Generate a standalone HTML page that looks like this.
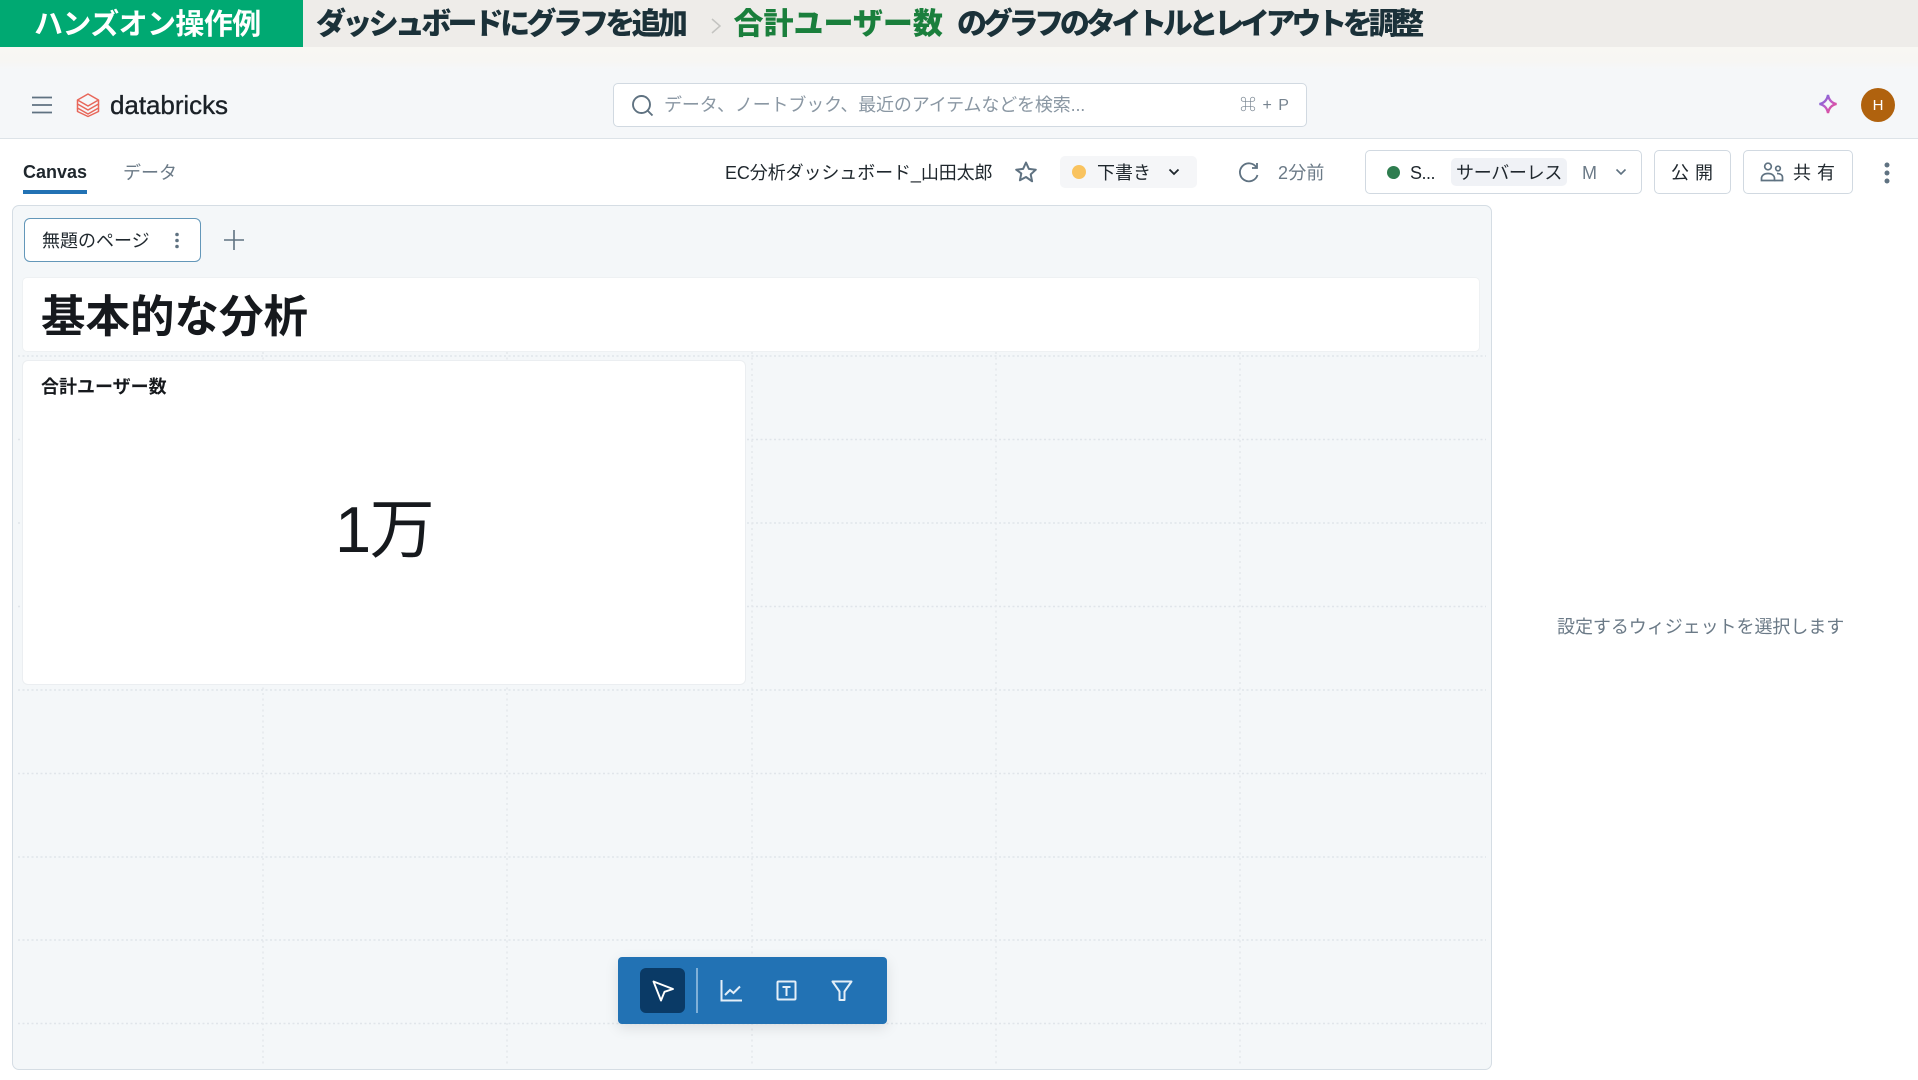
<!DOCTYPE html>
<html lang="ja"><head><meta charset="utf-8"><title>Databricks</title>
<style>
*{box-sizing:border-box}
html,body{margin:0;padding:0;width:1918px;height:1080px;overflow:hidden;background:#fff;font-family:"Liberation Sans","Noto Sans CJK JP",sans-serif;color:#1f272d}
.a{position:absolute;white-space:nowrap;line-height:1}
.c{position:absolute}
svg{position:absolute;overflow:visible}
.btn{position:absolute;background:#fff;border:1.5px solid #d1d9e1;border-radius:5px;height:44px;top:150px}
</style></head><body>

<!-- banner -->
<div class="c" style="left:0;top:0;width:1918px;height:47px;background:#eeece9"></div>
<div class="c" style="left:0;top:0;width:302.500px;height:47px;background:#00a972"></div>
<div class="c" style="left:0;top:47px;width:1918px;height:23px;background:linear-gradient(#f8f7f3,#f7f6f3 60%,#f5f7f9)"></div>
<div class="a" style="left:34px;top:10.500px;font-size:29px;font-weight:700;color:#fff;letter-spacing:-.6px">ハンズオン操作例</div>
<div class="a" style="left:316px;top:10px;font-size:30px;font-weight:900;color:#1b3139;letter-spacing:-3.7px">ダッシュボードにグラフを追加</div>
<svg style="left:710px;top:17px" width="12" height="18" viewBox="0 0 12 18"><path d="M2 2l8 7-8 7" fill="none" stroke="#c4c4c1" stroke-width="1.500"/></svg>
<div class="a" style="left:733.500px;top:10px;font-size:30px;font-weight:900;color:#1a7f3c">合計ユーザー数</div>
<div class="a" style="left:957px;top:10px;font-size:30px;font-weight:900;color:#1b3139;letter-spacing:-4.280px">のグラフのタイトルとレイアウトを調整</div>

<!-- top bar -->
<div class="c" style="left:0;top:70px;width:1918px;height:69px;background:#f5f7f9;border-bottom:1.5px solid #dde3e8"></div>
<svg style="left:32px;top:96px" width="20" height="18" viewBox="0 0 20 18"><path d="M0 1.500h20M0 9h20M0 16.500h20" stroke="#5f7281" stroke-width="1.700" fill="none"/></svg>
<svg style="left:76px;top:93px" width="24" height="24" viewBox="0 0 24 24" fill="none" stroke="#e8675a" stroke-width="1.500" stroke-linejoin="round"><path d="M12 1L22.500 7 12 13 1.500 7z"/><path d="M1.500 7v4L12 17l10.500-6V7"/><path d="M1.500 11v4L12 21l10.500-6v-4"/><path d="M1.500 15v3.500L12 23.500l10.500-5V15"/></svg>
<div class="a" style="left:110px;top:92px;font-size:26px;font-weight:400;color:#1b2127;letter-spacing:-.05px;-webkit-text-stroke:.35px #1b2127">databricks</div>

<div class="c" style="left:613px;top:83px;width:694px;height:44px;background:#fff;border:1.5px solid #d1d9e1;border-radius:5px"></div>
<svg style="left:631px;top:94px" width="23" height="23" viewBox="0 0 23 23" fill="none" stroke="#5f7281" stroke-width="1.900"><circle cx="10.500" cy="10.500" r="8.500"/><path d="M16.500 16.500l5 5"/></svg>
<div class="a" style="left:664px;top:96px;font-size:18px;color:#8a97a3;letter-spacing:-.15px">データ、ノートブック、最近のアイテムなどを検索...</div>
<div class="a" style="left:1240px;top:97.500px;font-size:16px;color:#76838f;letter-spacing:1px">⌘ + P</div>

<svg style="left:1816px;top:92px" width="24" height="24" viewBox="0 0 24 24" fill="none" stroke-width="2.300"><defs><linearGradient id="g" x1="0" y1="0" x2="1" y2="1"><stop offset="0" stop-color="#5b6be0"/><stop offset=".5" stop-color="#c05cc8"/><stop offset="1" stop-color="#f0467f"/></linearGradient></defs><path d="M12 3c1 5.200 3.500 8 8.500 9-5 1-7.500 3.800-8.500 9-1-5.200-3.500-8-8.500-9 5-1 7.500-3.800 8.500-9z" stroke="url(#g)"/></svg>
<div class="c" style="left:1861px;top:88px;width:34px;height:34px;border-radius:50%;background:#b0620e"></div>
<div class="a" style="left:1871.500px;top:98px;font-size:15px;color:#fff;width:13px;text-align:center">H</div>

<!-- tabs -->
<div class="a" style="left:23px;top:163px;font-size:18px;font-weight:700;color:#1f272d">Canvas</div>
<div class="c" style="left:23px;top:190px;width:64px;height:4px;background:#2272b4"></div>
<div class="a" style="left:123px;top:164px;font-size:18px;color:#6b7a87">データ</div>

<div class="a" style="left:725px;top:163.500px;font-size:18px;color:#1f272d;letter-spacing:-.1px">EC分析ダッシュボード_山田太郎</div>
<svg style="left:1014px;top:160px" width="24" height="24" viewBox="0 0 24 24" fill="none" stroke="#5f7281" stroke-width="2" stroke-linejoin="round"><path d="M12 2.500l2.900 6.400 6.900.8-5.100 4.700 1.400 6.900L12 17l-6.100 3.300 1.400-6.900L2.200 9.700l6.900-.8z"/></svg>
<div class="c" style="left:1060px;top:156px;width:137px;height:32px;background:#f5f6f8;border-radius:5px"></div>
<div class="c" style="left:1072px;top:165px;width:14px;height:14px;border-radius:50%;background:#f9c35f"></div>
<div class="a" style="left:1097px;top:163.500px;font-size:18px;color:#1f272d">下書き</div>
<svg style="left:1168px;top:168px" width="12" height="8" viewBox="0 0 12 8"><path d="M1.500 1.500L6 6l4.500-4.500" fill="none" stroke="#1f272d" stroke-width="1.800"/></svg>
<svg style="left:1238px;top:160px" width="22" height="24" viewBox="0 0 22 24" fill="none" stroke="#5f7281" stroke-width="1.800"><path d="M18.500 7.500A9 9 0 1 0 19.500 15"/><path d="M19 3v5h-5"/></svg>
<div class="a" style="left:1278px;top:163.500px;font-size:18px;color:#6b7a87;letter-spacing:.2px">2分前</div>

<div class="btn" style="left:1365px;width:277px"></div>
<div class="c" style="left:1387px;top:166px;width:13px;height:13px;border-radius:50%;background:#2e7d4f"></div>
<div class="a" style="left:1410px;top:164px;font-size:18px;color:#1f272d;letter-spacing:-.5px">S...</div>
<div class="c" style="left:1451px;top:158px;width:116px;height:28px;background:#f0f2f6;border-radius:5px"></div>
<div class="a" style="left:1456px;top:163.500px;font-size:18px;color:#1f272d;letter-spacing:-.3px">サーバーレス</div>
<div class="a" style="left:1582px;top:164px;font-size:18px;color:#6b7a87">M</div>
<svg style="left:1615px;top:168px" width="12" height="8" viewBox="0 0 12 8"><path d="M1.500 1.500L6 6l4.500-4.500" fill="none" stroke="#5f7281" stroke-width="1.600"/></svg>
<div class="btn" style="left:1654px;width:77px"></div>
<div class="a" style="left:1671px;top:163.500px;font-size:18px;color:#1f272d;letter-spacing:6px">公開</div>
<div class="btn" style="left:1743px;width:110px"></div>
<svg style="left:1760px;top:162px" width="24" height="20" viewBox="0 0 24 20" fill="none" stroke="#5f7281" stroke-width="1.700"><circle cx="8" cy="4.500" r="3.300"/><circle cx="18" cy="6.500" r="2.300"/><path d="M1.500 18.500v-2C1.500 13.500 4 11.500 8 11.500s6.500 2 6.500 5v2z"/><path d="M17 11.500c3.500 0 5.500 1.500 5.500 4v3h-8"/></svg>
<div class="a" style="left:1793px;top:163.500px;font-size:18px;color:#1f272d;letter-spacing:6px">共有</div>
<svg style="left:1882.500px;top:162px" width="8" height="22" viewBox="0 0 8 22" fill="#5f7281"><circle cx="4" cy="3" r="2.500"/><circle cx="4" cy="11" r="2.500"/><circle cx="4" cy="19" r="2.500"/></svg>

<!-- canvas panel -->
<div class="c" style="left:12px;top:205px;width:1480px;height:865px;background:#f4f7f9;border:1.5px solid #d5dde4;border-radius:7px"></div>
<svg style="left:0;top:0" width="1918" height="1080" fill="none">
<g stroke="#e0e5ea" stroke-width="1.500" stroke-dasharray="2 2.500">
<path d="M18 356H1486M18 439.500H1486M18 523H1486M18 606.500H1486M18 690H1486M18 773.500H1486M18 857H1486M18 940H1486M18 1023.500H1486"/>
</g>
<g stroke="#e4e8ec" stroke-width="1.500" stroke-dasharray="2 3.500">
<path d="M263 352V1064M507 352V1064M752 352V1064M996 352V1064M1240 352V1064"/>
</g>
</svg>

<div class="c" style="left:24px;top:218px;width:177px;height:44px;background:#fff;border:1.800px solid #6397b9;border-radius:6px"></div>
<div class="a" style="left:42px;top:231.500px;font-size:18px;color:#1f272d">無題のページ</div>
<svg style="left:174px;top:232px" width="6" height="17" viewBox="0 0 6 17" fill="#5f7281"><circle cx="3" cy="2.500" r="1.800"/><circle cx="3" cy="8.500" r="1.800"/><circle cx="3" cy="14.500" r="1.800"/></svg>
<svg style="left:224px;top:230px" width="20" height="20" viewBox="0 0 20 20"><path d="M10 0v20M0 10h20" stroke="#5f7281" stroke-width="1.600"/></svg>

<div class="c" style="left:23px;top:278px;width:1456px;height:73px;background:#fff;border-radius:4px;box-shadow:0 0 0 1px #eef1f3"></div>
<div class="a" style="left:41px;top:295.500px;font-size:44.500px;font-weight:700;color:#16191d">基本的な分析</div>

<div class="c" style="left:23px;top:361px;width:722px;height:323px;background:#fff;border-radius:5px;box-shadow:0 0 0 1px #ebeef1"></div>
<div class="a" style="left:41px;top:377.500px;font-size:18px;font-weight:700;color:#16191d">合計ユーザー数</div>
<div class="a" style="left:335px;top:497px;font-size:65px;color:#16191d;letter-spacing:-1.500px">1万</div>

<div class="a" style="left:1557px;top:618px;font-size:18px;color:#6b7a87;letter-spacing:-.05px">設定するウィジェットを選択します</div>

<!-- toolbar -->
<div class="c" style="left:618px;top:957px;width:269px;height:67px;background:#2272b4;border-radius:4px;box-shadow:0 4px 14px rgba(0,0,0,.10)"></div>
<div class="c" style="left:640px;top:968px;width:45px;height:45px;background:#0a3a66;border-radius:6px"></div>
<div class="c" style="left:696px;top:968px;width:2px;height:45px;background:#7fb0d8"></div>
<svg style="left:651px;top:979px" width="24" height="24" viewBox="0 0 24 24" fill="none" stroke="#fff" stroke-width="1.900" stroke-linejoin="round"><path d="M2.500 2.500L22 10l-8.500 2.800L10 21.500z"/></svg>
<svg style="left:720px;top:980px" width="22" height="22" viewBox="0 0 22 22" fill="none" stroke="#e4eff8" stroke-width="2"><path d="M1.500 0v20.500H22"/><path d="M5 15l5-5 3.500 3 6.500-6.500"/></svg>
<svg style="left:775.500px;top:980px" width="22" height="22" viewBox="0 0 22 22" fill="none" stroke="#e4eff8" stroke-width="2"><rect x="1.500" y="1.500" width="18" height="18" rx="1"/><path d="M6.500 7h8M10.500 7v9"/></svg>
<svg style="left:831px;top:980px" width="22" height="22" viewBox="0 0 22 22" fill="none" stroke="#e4eff8" stroke-width="2" stroke-linejoin="round"><path d="M1.500 1.500h19L13.500 11.500v8.500h-5v-8.500z"/></svg>
</body></html>
